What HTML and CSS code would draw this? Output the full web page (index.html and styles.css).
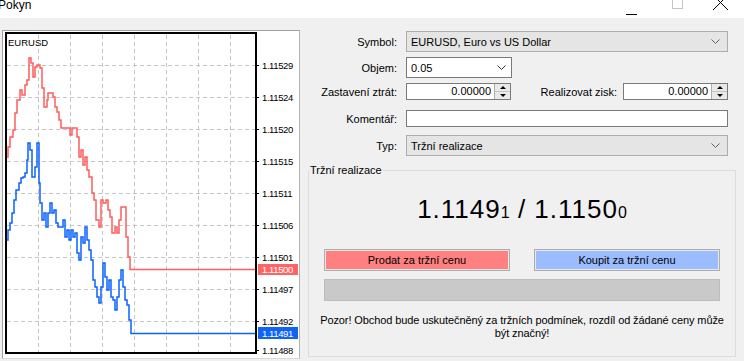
FILE: index.html
```html
<!DOCTYPE html>
<html>
<head>
    <meta charset="utf-8">
    <link rel="stylesheet" href="styles.css">
</head>
<body>
    <div class="titlebar">
        <span class="title">Pokyn</span>
        <div class="controls">
            <svg class="ctl" width="46" height="18"><path class="ctl-min" d="M20 14.5H31"/></svg>
            <svg class="ctl" width="46" height="18"><rect class="ctl-max" x="20.5" y="-1.5" width="10" height="10"/></svg>
            <svg class="ctl" width="46" height="18"><path class="ctl-close" d="M15 -5L30 10M30 -5L15 10"/></svg>
        </div>
    </div>

    <div class="main">
        <div class="chart">
            <svg viewBox="3 31 296 327" width="296" height="327">
                <path class="grid" d="M38.5 35V352M70.5 35V352M102.5 35V352M134.5 35V352M166.5 35V352M198.5 35V352M230.5 35V352"/>
                <path class="grid" d="M7 65.5H255M7 97.5H255M7 129.5H255M7 161.5H255M7 193.5H255M7 225.5H255M7 257.5H255M7 289.5H255M7 321.5H255"/>
                <path class="ask-line" d="M6 157H8V147H10V137H13V130H15V113H17V100H20V90H22V95H25V85H27V80H29V58H31V63H33V77H35V67H37V65H40V68H42V88H44V107H47V100H48V93H53V97H55V107H57V112H59V120H61V128H70V135H72V128H77V137H79V157H81V150H83V165H85V157H87V170H89V177H92V193H94V200H96V220H99V227H101V200H103V203H106V200H108V210H110V217H112V233H115V227H117V233H119V220H121V207H126V237H128V257H130V269.5H256"/>
                <path class="bid-line" d="M6 240H8V230H10V223H12V213H14V200H16V190H19V183H21V178H23V177H25V173H27V160H28V143H30V150H32V177H35V167H37V143H39V183H40V203H42V220H44V213H46V227H48V213H50V203H52V213H54V210H56V223H58V227H63V220H65V237H67V230H69V240H71V230H73V237H75V233H77V253H79V260H81V237H83V243H85V227H87V240H89V250H91V260H93V280H95V287H97V297H99V303H101V287H103V263H105V277H107V290H109V280H111V297H113V300H115V310H117V297H119V280H121V270H123V287H125V300H127V305H129V320H131V333.5H256"/>
                <rect class="frame" x="6" y="33" width="250" height="320"/>
                <path class="tick" d="M256 65.5H259M256 97.5H259M256 129.5H259M256 161.5H259M256 193.5H259M256 225.5H259M256 257.5H259M256 289.5H259M256 321.5H259M256 350.5H259"/>
                <text class="symbol" x="8" y="46">EURUSD</text>
                <g class="axis">
                    <text x="262" y="69">1.11529</text>
                    <text x="262" y="101">1.11524</text>
                    <text x="262" y="133">1.11520</text>
                    <text x="262" y="165">1.11515</text>
                    <text x="262" y="197">1.11511</text>
                    <text x="262" y="229">1.11506</text>
                    <text x="262" y="261">1.11501</text>
                    <text x="262" y="293">1.11497</text>
                    <text x="262" y="325">1.11492</text>
                    <text x="262" y="354">1.11488</text>
                </g>
                <rect class="ask-tag" x="258" y="264" width="40" height="11"/>
                <text class="tag-text" x="262" y="273">1.11500</text>
                <rect class="bid-tag" x="258" y="327" width="40" height="12"/>
                <text class="tag-text" x="262" y="337">1.11491</text>
            </svg>
        </div>

        <div class="form">
            <div class="row row-symbol">
                <label>Symbol:</label>
                <div class="combo combo-ro">EURUSD, Euro vs US Dollar
                    <svg class="chevron" width="9" height="5"><path d="M0.5 0.5L4.5 4.5L8.5 0.5"/></svg>
                </div>
            </div>
            <div class="row row-volume">
                <label>Objem:</label>
                <div class="combo combo-edit">0.05
                    <svg class="chevron dark" width="9" height="5"><path d="M0.5 0.5L4.5 4.5L8.5 0.5"/></svg>
                </div>
            </div>
            <div class="row row-levels">
                <label>Zastavení ztrát:</label>
                <div class="spin">
                    <span class="spin-value">0.00000</span>
                    <div class="spin-btns"><div class="up"></div><div class="down"></div></div>
                </div>
                <label class="label-tp">Realizovat zisk:</label>
                <div class="spin">
                    <span class="spin-value">0.00000</span>
                    <div class="spin-btns"><div class="up"></div><div class="down"></div></div>
                </div>
            </div>
            <div class="row row-comment">
                <label>Komentář:</label>
                <div class="textbox"></div>
            </div>
            <div class="row row-type">
                <label>Typ:</label>
                <div class="combo combo-ro">Tržní realizace
                    <svg class="chevron" width="9" height="5"><path d="M0.5 0.5L4.5 4.5L8.5 0.5"/></svg>
                </div>
            </div>

            <fieldset class="group">
                <legend>Tržní realizace</legend>
                <div class="group-body">
                    <div class="price">1.1149<span class="pip">1</span> / 1.1150<span class="pip">0</span></div>
                    <div class="buttons">
                        <div class="btn sell">Prodat za tržní cenu</div>
                        <div class="btn buy">Koupit za tržní cenu</div>
                    </div>
                    <div class="progress"></div>
                    <p class="warning">Pozor! Obchod bude uskutečněný za tržních podmínek, rozdíl od žádané ceny může<br>být značný!</p>
                </div>
            </fieldset>
        </div>
    </div>
</body>
</html>
```

FILE: styles.css
```css
body {
    margin: 0;
    width: 744px;
    height: 361px;
    overflow: hidden;
    background-color: #f0f0f0;
    font-family: "Liberation Sans", Arial, sans-serif;
    font-size: 11px;
    color: #000;
}

.titlebar {
    height: 18px;
    background-color: #fff;
    display: flex;
    justify-content: space-between;
    overflow: hidden;
}

.title {
    font-size: 12px;
    line-height: 14px;
    margin-top: -2px;
    margin-left: -2px;
}

.controls {
    display: flex;
}

.ctl {
    display: block;
    overflow: visible;
}

.ctl-min,
.ctl-close {
    stroke: #000;
    stroke-width: 1;
    fill: none;
}

.ctl-max {
    stroke: #c4c4c4;
    fill: none;
}

.main {
    display: flex;
    padding-top: 12px;
}

.chart {
    width: 296px;
    height: 327px;
    margin-left: 2px;
    background-color: #fff;
    border: 1px solid #a0a0a0;
    border-right-color: #b4b4b4;
    border-bottom-color: #dadada;
}

.chart svg {
    display: block;
}

.grid {
    stroke: #c6c6c6;
    stroke-dasharray: 4 3;
    fill: none;
    shape-rendering: crispEdges;
}

.ask-line {
    fill: none;
    stroke: #ff5c5c;
    stroke-width: 1.5;
}

.bid-line {
    fill: none;
    stroke: #0a62ff;
    stroke-width: 1.5;
}

.frame {
    fill: none;
    stroke: #000;
    stroke-width: 2;
}

.tick {
    stroke: #000;
    shape-rendering: crispEdges;
}

.symbol {
    font-family: "Liberation Sans", Arial, sans-serif;
    font-size: 9.5px;
    fill: #000;
}

.axis text,
.tag-text {
    font-family: "Liberation Sans", Arial, sans-serif;
    font-size: 9.5px;
    letter-spacing: -0.4px;
    fill: #000;
}

.tag-text {
    fill: #fff;
}

.ask-tag {
    fill: #ff6464;
}

.bid-tag {
    fill: #0f64f5;
}

.form {
    width: 428px;
    margin-left: 8px;
    padding-top: 1px;
}

.row {
    display: flex;
    align-items: center;
    margin-right: 8px;
}

.row label {
    width: 89px;
    margin-right: 9px;
    text-align: right;
    flex-shrink: 0;
}

.row-symbol {
    height: 21px;
    margin-bottom: 5px;
}

.row-volume {
    height: 21px;
    margin-bottom: 5px;
}

.row-levels {
    height: 17px;
    margin-bottom: 10px;
}

.row-comment {
    height: 17px;
    margin-bottom: 8px;
}

.row-type {
    height: 21px;
    margin-bottom: 8px;
}

.combo {
    height: 21px;
    box-sizing: border-box;
    display: flex;
    align-items: center;
    justify-content: space-between;
    padding: 0 7px 0 4px;
}

.combo-ro {
    flex: 1;
    background-color: #e5e5e5;
    border: 1px solid #adadad;
}

.combo-edit {
    width: 106px;
    background-color: #fff;
    border: 1px solid #7a7a7a;
    padding-right: 5px;
}

.chevron {
    display: block;
}

.chevron path {
    fill: none;
    stroke: #606060;
    stroke-width: 1;
}

.chevron.dark path {
    stroke: #333;
}

.spin {
    width: 105px;
    height: 17px;
    box-sizing: border-box;
    display: flex;
    background-color: #fff;
    border: 1px solid #7a7a7a;
}

.spin-value {
    flex: 1;
    text-align: right;
    padding-right: 3px;
    line-height: 15px;
}

.spin-btns {
    width: 15px;
    display: flex;
    flex-direction: column;
    border-left: 1px solid #adadad;
    background-color: #e9e9e9;
}

.spin-btns div {
    flex: 1;
    display: flex;
    align-items: center;
    justify-content: center;
}

.spin-btns .up {
    border-bottom: 1px solid #c4c4c4;
}

.spin-btns .up::after {
    content: "";
    border-left: 3px solid transparent;
    border-right: 3px solid transparent;
    border-bottom: 3px solid #000;
}

.spin-btns .down::after {
    content: "";
    border-left: 3px solid transparent;
    border-right: 3px solid transparent;
    border-top: 3px solid #000;
}

.row .label-tp {
    width: auto;
    flex: 1;
    margin-right: 6px;
}

.textbox {
    flex: 1;
    height: 17px;
    box-sizing: border-box;
    background-color: #fff;
    border: 1px solid #7a7a7a;
}

.group {
    margin: 0;
    padding: 0;
    height: 193px;
    box-sizing: border-box;
    border: 1px solid #dcdcdc;
}

.group legend {
    padding: 0 1px;
    line-height: 13px;
}

.group-body {
    padding: 0 15px;
}

.price {
    margin-top: 17px;
    font-size: 26px;
    line-height: 30px;
    letter-spacing: 1px;
    text-align: center;
}

.pip {
    font-size: 16px;
    letter-spacing: 0;
}

.buttons {
    display: flex;
    justify-content: space-between;
    margin-top: 21px;
}

.btn {
    width: 186px;
    height: 22px;
    box-sizing: border-box;
    line-height: 20px;
    text-align: center;
    border: 1px solid #adadad;
    box-shadow: inset 0 0 0 1px #e8e8e8;
}

.sell {
    background-color: #ff8080;
}

.buy {
    background-color: #9bbcff;
}

.progress {
    height: 22px;
    margin-top: 8px;
    box-sizing: border-box;
    background-color: #c9c9c9;
    border: 1px solid #bcbcbc;
}

.warning {
    margin: 13px -10px 0;
    line-height: 13px;
    letter-spacing: -0.1px;
    white-space: nowrap;
    text-align: center;
}
```
